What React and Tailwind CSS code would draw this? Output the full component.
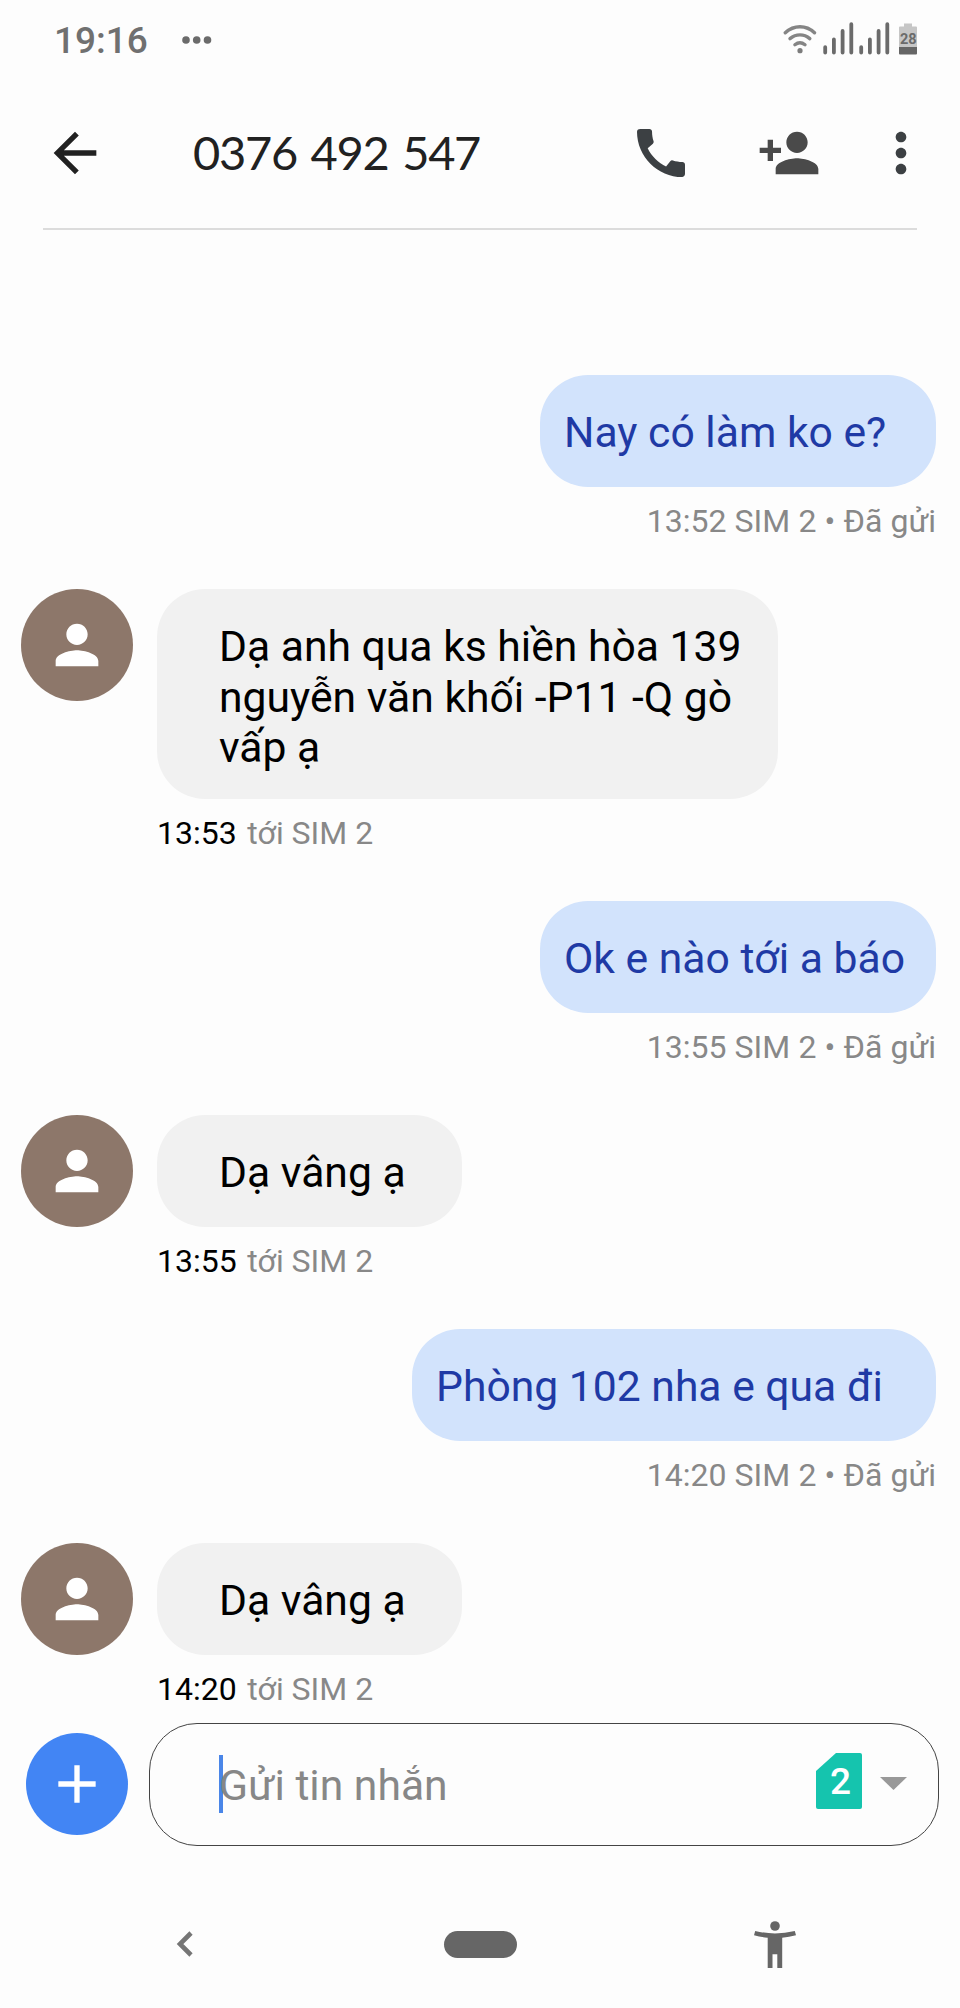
import { useState } from "react";
import {
  MdArrowBack,
  MdCall,
  MdPersonAdd,
  MdMoreVert,
  MdPerson,
  MdAdd,
} from "react-icons/md";

const initialMessages = [
  { id: 1, mine: true, text: "Nay có làm ko e?", time: "13:52", size: "w-[396px] h-[112px]" },
  {
    id: 2,
    mine: false,
    text: "Dạ anh qua ks hiền hòa 139 nguyễn văn khối -P11 -Q gò vấp ạ",
    time: "13:53",
    size: "w-[621px] h-[210px]",
  },
  { id: 3, mine: true, text: "Ok e nào tới a báo", time: "13:55", size: "w-[396px] h-[112px]" },
  { id: 4, mine: false, text: "Dạ vâng ạ", time: "13:55", size: "w-[305px] h-[112px]" },
  { id: 5, mine: true, text: "Phòng 102 nha e qua đi", time: "14:20", size: "w-[524px] h-[112px]" },
  { id: 6, mine: false, text: "Dạ vâng ạ", time: "14:20", size: "w-[305px] h-[112px]" },
];

function SignalBars() {
  return (
    <svg width="31" height="33" viewBox="0 0 31 33" stroke="#6b6b6b" strokeWidth="3.8" strokeLinecap="round">
      <path d="M2.2 25.200V30.500M10.900 17.400V30.500M19.600 9V30.500M28.300 2.200V30.500" />
    </svg>
  );
}

function StatusBar() {
  return (
    <div className="flex h-[80px] items-start justify-between pl-[54px] pr-[43px] pt-[22px]">
      <div className="flex items-center">
        <span className="text-[37px] leading-[37px] font-medium text-[#707070]">19:16</span>
        <svg className="ml-[34px] -mt-px" width="30" height="8" viewBox="0 0 30 8" fill="#6b6b6b">
          <circle cx="4" cy="4" r="3.8" />
          <circle cx="14.7" cy="4" r="3.8" />
          <circle cx="25.5" cy="4" r="3.8" />
        </svg>
      </div>

      <div className="flex items-start">
        {/* Wifi */}
        <svg className="mt-px -ml-px" width="34" height="33" viewBox="0 0 34 33" fill="none" stroke="#858585" strokeWidth="3.4" strokeLinecap="round">
          <path d="M2.3 9.8C11 1.8 23 1.8 31.5 9.8" />
          <path d="M7 15.6C13 10.6 21 10.6 26.8 15.6" />
          <path d="M11.9 21.8C15 19.3 18.9 19.3 22 21.8" />
          <circle cx="17" cy="27.7" r="2.6" fill="#7c7c7c" stroke="none" />
        </svg>
        <div className="ml-[6px] flex gap-[5px]">
          <SignalBars />
          <SignalBars />
        </div>
        {/* Battery */}
        <div className="relative ml-[9px] mt-px h-[32px] w-[18px]">
          <svg width="18" height="32" viewBox="0 0 18 32">
            <path d="M5 0.5h8v3h4a1 1 0 0 1 1 1V24H0V4.500a1 1 0 0 1 1-1h4z" fill="#c6c6c6" />
            <path d="M0 24h18v6.500a1 1 0 0 1-1 1H1a1 1 0 0 1-1-1z" fill="#666" />
          </svg>
          <span className="absolute left-[1px] top-[9px] text-[14.5px] leading-[16px] font-bold text-[#6b6b6b]">
            28
          </span>
        </div>
      </div>
    </div>
  );
}

function Header() {
  return (
    <div className="mx-[43px] flex h-[150px] items-center border-b-2 border-[#dcdcdc] pb-[2px]">
      <button>
        <MdArrowBack size={64} color="#212121" />
      </button>
      <h1 className="ml-[86px] -mt-[2px] flex-1 font-[Lato] text-[47px] leading-[60px] text-[#212121] [word-spacing:3px] tracking-[-1.3px]">
        0376 492 547
      </h1>
      <div className="flex items-center">
        <MdCall size={64} color="#3c4043" />
        <MdPersonAdd className="ml-[64px]" size={64} color="#4a4a4a" />
        <MdMoreVert className="-mr-[16px] ml-[48px]" size={64} color="#3c4043" />
      </div>
    </div>
  );
}

function Message({ message }) {
  if (message.mine) {
    return (
      <div className="flex flex-col items-end pr-[24px]">
        <div className={`${message.size} rounded-[48px] bg-[#d2e3fc] pl-[24px] pt-[32px] text-[42.67px] leading-[50.5px] whitespace-nowrap text-[#1f3aa5]`}>
          {message.text}
        </div>
        <div className="mt-[14px] h-[88px] text-[32px] leading-[40px] whitespace-nowrap text-[#888] [word-spacing:0.2px]">
          {message.time} SIM 2 • Đã gửi
        </div>
      </div>
    );
  }

  return (
    <div className="flex items-start pl-[21px]">
      <div className="flex h-[112px] w-[112px] items-center justify-center rounded-full bg-[#8d776a]">
        <MdPerson size={64} color="#fff" />
      </div>
      <div className="ml-[24px]">
        <div className={`${message.size} rounded-[48px] bg-[#f1f1f1] pl-[62px] pt-[32px] text-[42.67px] leading-[50.5px] text-black`}>
          {message.text}
        </div>
        <div className="mt-[14px] h-[88px] text-[32px] leading-[40px] text-[#888]">
          <span className="mr-[2.5px] text-black">{message.time}</span> tới SIM 2
        </div>
      </div>
    </div>
  );
}

function Composer() {
  return (
    <div className="flex items-center pl-[26px] pr-[21px]">
      <button className="flex h-[102px] w-[102px] items-center justify-center rounded-full bg-[#4285f4]">
        <MdAdd size={64} color="#fff" />
      </button>
      <div className="ml-[21px] mt-px flex h-[123px] flex-1 items-center rounded-[48px] border border-[#444] pl-[69px] pr-[31px]">
        <div className="-mt-[2px] h-[58px] w-[4px] bg-[#4a86e8]" />
        <span className="-ml-[4px] mt-px flex-1 text-[42.67px] leading-[50px] text-[#878787]">Gửi tin nhắn</span>
        {/* SIM picker */}
        <div className="relative -mt-[8px] h-[56px] w-[46px]">
          <svg width="46" height="56" viewBox="0 0 46 56" fill="#15c4ae">
            <path d="M20 0H44a2 2 0 0 1 2 2V54a2 2 0 0 1-2 2H2a2 2 0 0 1-2-2V18z" />
          </svg>
          <span className="absolute left-[14px] top-[10px] text-[37px] leading-[38px] font-medium text-white">2</span>
        </div>
        <svg className="ml-[18px] -mt-[3px]" width="27" height="13" viewBox="0 0 27 13" fill="#999">
          <path d="M0 0H27L13.500 13z" />
        </svg>
      </div>
    </div>
  );
}

function NavigationBar() {
  return (
    <div className="mt-[73px] flex h-[50px] items-center pl-[176px]">
      <svg width="18" height="26" viewBox="0 0 18 26" fill="none" stroke="#757575" strokeWidth="4.6">
        <path d="M15 2L4 13L15 24" />
      </svg>
      <div className="ml-[250px] h-[27px] w-[73px] rounded-full bg-[#666]" />
      <svg className="ml-[237px] mt-px" width="42" height="48" viewBox="0 0 42 48" fill="#666">
        <circle cx="21" cy="5" r="4.8" />
        <path d="M1.200 10Q21 14.800 40.800 10L42 14.300Q35 16.200 28.200 16.800V47H23.300V33.300H18.500V47H13.700V16.800Q7 16.200 0 14.300z" />
      </svg>
    </div>
  );
}

export default function App() {
  const [messages] = useState(initialMessages);

  return (
    <div className="flex h-[2008px] w-[960px] flex-col overflow-hidden bg-[#fdfdfd] font-[Roboto,sans-serif]">
      <StatusBar />
      <Header />

      {/* Conversation */}
      <div className="mt-[145px] h-[1347px] overflow-hidden">
        {messages.map((message) => (
          <Message key={message.id} message={message} />
        ))}
      </div>

      <Composer />
      <NavigationBar />
    </div>
  );
}
